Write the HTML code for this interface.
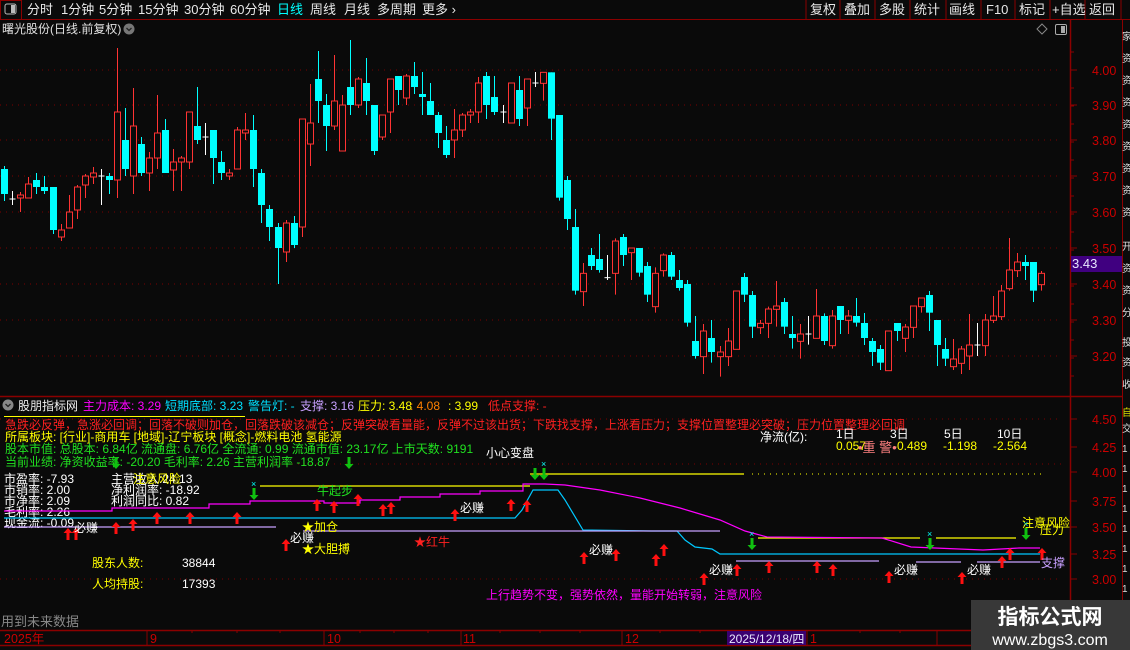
<!DOCTYPE html>
<html><head><meta charset="utf-8"><style>
html,body{margin:0;padding:0;background:#0a0a0a;width:1130px;height:650px;overflow:hidden}
svg{display:block;font-family:"Liberation Sans","Noto Sans CJK SC",sans-serif;font-size:12px}
</style></head><body>
<svg id="s" width="1130" height="650" xmlns="http://www.w3.org/2000/svg">
<rect width="1130" height="650" fill="#0a0a0a"/>
<!-- toolbar -->
<line x1="0" y1="19.5" x2="1130" y2="19.5" stroke="#8b0000"/>
<rect x="0.5" y="0.5" width="21" height="19" fill="none" stroke="#8b0000"/>
<rect x="5" y="4" width="11" height="10" rx="2" fill="none" stroke="#bbb"/><rect x="11" y="5" width="4" height="8" fill="#bbb"/>
<g fill="#e8e8e8" font-size="13">
<text x="27" y="14">分时</text><text x="61" y="14">1分钟</text><text x="99" y="14">5分钟</text><text x="138" y="14">15分钟</text><text x="184" y="14">30分钟</text><text x="230" y="14">60分钟</text>
<text x="277" y="14" fill="#00ffff">日线</text><text x="310" y="14">周线</text><text x="344" y="14">月线</text><text x="377" y="14">多周期</text><text x="422" y="14">更多 ›</text>
</g>
<g stroke="#8b0000"><line x1="806" y1="0" x2="806" y2="19"/><line x1="840" y1="0" x2="840" y2="19"/><line x1="875" y1="0" x2="875" y2="19"/><line x1="910" y1="0" x2="910" y2="19"/><line x1="946" y1="0" x2="946" y2="19"/><line x1="981" y1="0" x2="981" y2="19"/><line x1="1015" y1="0" x2="1015" y2="19"/><line x1="1050" y1="0" x2="1050" y2="19"/><line x1="1085" y1="0" x2="1085" y2="19"/><line x1="1121" y1="0" x2="1121" y2="19"/></g>
<g fill="#e8e8e8" font-size="13"><text x="810" y="14">复权</text><text x="844" y="14">叠加</text><text x="879" y="14">多股</text><text x="914" y="14">统计</text><text x="949" y="14">画线</text><text x="986" y="14">F10</text><text x="1019" y="14">标记</text><text x="1052" y="14">+自选</text><text x="1089" y="14">返回</text></g>
<!-- title -->
<text x="2" y="33" fill="#e0e0e0">曙光股份(日线.前复权)</text>
<circle cx="129" cy="29" r="5.5" fill="#777"/><path d="M126.5 28l2.5 2.5 2.5-2.5" stroke="#222" fill="none" stroke-width="1.3"/>
<path d="M1042 24l5 5-5 5-5-5z" fill="none" stroke="#888"/>
<rect x="1055.5" y="24.5" width="11" height="10" rx="1.5" fill="none" stroke="#aaa"/><rect x="1061" y="26" width="4" height="7" fill="#aaa"/>
<!-- main grid -->
<g stroke="#7a0000" stroke-dasharray="1,5">
<line x1="0" y1="70" x2="1062" y2="70"/><line x1="0" y1="105" x2="1062" y2="105"/><line x1="0" y1="140" x2="1062" y2="140"/><line x1="0" y1="176" x2="1062" y2="176"/><line x1="0" y1="212" x2="1062" y2="212"/><line x1="0" y1="248" x2="1062" y2="248"/><line x1="0" y1="284" x2="1062" y2="284"/><line x1="0" y1="320" x2="1062" y2="320"/><line x1="0" y1="356" x2="1062" y2="356"/>
</g>
<line x1="1070.5" y1="20" x2="1070.5" y2="630" stroke="#8b0000" stroke-width="1.5"/>
<line x1="1122.5" y1="20" x2="1122.5" y2="650" stroke="#8b0000"/>
<g id="ticks" stroke="#8b0000"></g>
<g fill="#cc0000" font-size="12.5"><text x="1092" y="75">4.00</text><text x="1092" y="110">3.90</text><text x="1092" y="145">3.80</text><text x="1092" y="181">3.70</text><text x="1092" y="217">3.60</text><text x="1092" y="253">3.50</text><text x="1092" y="289">3.40</text><text x="1092" y="325">3.30</text><text x="1092" y="361">3.20</text></g>
<rect x="1071" y="256" width="51" height="16" fill="#400080"/><text x="1072" y="268" fill="#e8e8ff" font-size="13">3.43</text>
<g id="candles"></g>
<!-- right strip -->
<g fill="#ddd" font-size="10"><text x="1122" y="40">家</text><text x="1122" y="62">资</text><text x="1122" y="84">资</text><text x="1122" y="106">资</text><text x="1122" y="128">资</text><text x="1122" y="150">资</text><text x="1122" y="172">资</text><text x="1122" y="194">资</text><text x="1122" y="216">资</text><text x="1122" y="250">开</text><text x="1122" y="272">资</text><text x="1122" y="294">资</text><text x="1122" y="316">分</text><text x="1122" y="346">投</text><text x="1122" y="366">资</text><text x="1122" y="388">收</text>
<text x="1122" y="416" fill="#dd0">自</text><text x="1122" y="432">交</text><text x="1122" y="452">1</text><text x="1122" y="472">1</text><text x="1122" y="492">1</text><text x="1122" y="512">1</text><text x="1122" y="532">1</text><text x="1122" y="552">1</text><text x="1122" y="572">1</text><text x="1122" y="592">1</text></g>
<!-- panel separator -->
<line x1="0" y1="396.5" x2="1122" y2="396.5" stroke="#8b0000" stroke-width="1.5"/>
<g fill="#cc0000" font-size="12.5"><text x="1092" y="424">4.50</text><text x="1092" y="452">4.25</text><text x="1092" y="477">4.00</text><text x="1092" y="506">3.75</text><text x="1092" y="532">3.50</text><text x="1092" y="559">3.25</text><text x="1092" y="584">3.00</text></g>
<g stroke="#7a0000" stroke-dasharray="1,5"><line x1="0" y1="419" x2="1062" y2="419"/><line x1="250" y1="464" x2="1062" y2="464"/><line x1="0" y1="579" x2="1062" y2="579"/></g>
<!-- header -->
<circle cx="8" cy="405" r="5.5" fill="#888"/><path d="M5.5 404l2.5 2.5 2.5-2.5" stroke="#222" fill="none" stroke-width="1.3"/>
<text x="18" y="410" fill="#eee">股朋指标网</text>
<text x="83" y="410" fill="#ff00ff">主力成本: 3.29</text>
<text x="165" y="410" fill="#00e0ff">短期底部: 3.23</text>
<text x="248" y="410" fill="#00e0ff">警告灯: -</text>
<text x="300" y="410" fill="#c8a0ff">支撑: 3.16</text>
<text x="358" y="410" fill="#ffff00">压力: 3.48</text>
<text x="410" y="410" fill="#ff8000">: 4.08</text>
<text x="448" y="410" fill="#ffff00">: 3.99</text>
<text x="488" y="410" fill="#ff2020">低点支撑: -</text>
<line x1="4" y1="416.5" x2="245" y2="416.5" stroke="#ffff00"/>
<text x="5" y="429" fill="#ff2020">急跌必反弹，急涨必回调；回落不破则加仓，回落跌破该减仓；反弹突破看量能，反弹不过该出货；下跌找支撑，上涨看压力；支撑位置整理必突破；压力位置整理必回调</text>
<text x="5" y="441" fill="#ffff00">所属板块: [行业]-商用车 [地域]-辽宁板块 [概念]-燃料电池 氢能源</text>
<text x="5" y="453" fill="#20e020">股本市值: 总股本: 6.84亿 流通盘: 6.76亿 全流通: 0.99 流通市值: 23.17亿 上市天数: 9191</text>
<text x="5" y="466" fill="#20e020">当前业绩: 净资收益率: -20.20 毛利率: 2.26 主营利润率 -18.87</text>
<text x="486" y="457" fill="#fff">小心变盘</text>
<g fill="#fff"><text x="4" y="483">市盈率: -7.93</text><text x="4" y="494">市销率: 2.00</text><text x="4" y="505">市净率: 2.09</text><text x="4" y="516">毛利率: 2.26</text><text x="4" y="527">现金流: -0.09</text>
<text x="111" y="483">主营收入:24.13</text><text x="111" y="494">净利润率: -18.92</text><text x="111" y="505">利润同比: 0.82</text></g>
<text x="133" y="483" fill="#ffff00">注意风险</text>
<text x="760" y="441" fill="#fff">净流(亿):</text>
<g fill="#fff"><text x="836" y="438">1日</text><text x="890" y="438">3日</text><text x="944" y="438">5日</text><text x="997" y="438">10日</text></g>
<g fill="#ffff00"><text x="836" y="450">0.057</text><text x="893" y="450">-0.489</text><text x="943" y="450">-1.198</text><text x="993" y="450">-2.564</text></g>
<text x="858" y="452" fill="#ff8080" font-size="13">•重 警•</text>
<!-- lines -->
<polyline fill="none" stroke="#ffff00" stroke-width="1.2" points="260,486 530,486"/>
<polyline fill="none" stroke="#ffff00" stroke-width="1.2" points="530,474 744,474"/>
<line x1="752" y1="474" x2="1044" y2="474" stroke="#ffff00" stroke-dasharray="1,5"/>
<polyline fill="none" stroke="#ffff00" stroke-width="1.2" points="758,538 920,538"/><polyline fill="none" stroke="#ffff00" stroke-width="1.2" points="936,538 1016,538"/>
<polyline fill="none" stroke="#ff00ff" stroke-width="1.2" points="4,511 112,511 112,508 209,508 209,504 250,504 250,501 324,501 324,503 360,503 360,500 400,500 400,497 440,497 440,494 480,494 480,491 523,491 523,484 545,484 565,485 600,490 640,498 680,508 720,520 745,531 767,537 882,538 911,547 983,550 1019,548 1040,548"/>
<polyline fill="none" stroke="#00c8ff" stroke-width="1.2" points="4,518 515,518 522,510 533,490 558,490 565,500 583,530 651,531 677,531 685,540 695,547 712,549 720,554 1040,554"/>
<polyline fill="none" stroke="#c8a0ff" stroke-width="1.2" points="4,527 276,527"/>
<polyline fill="none" stroke="#c8a0ff" stroke-width="1.2" points="303,531 720,531"/>
<polyline fill="none" stroke="#c8a0ff" stroke-width="1.2" points="736,561 879,561"/><polyline fill="none" stroke="#c8a0ff" stroke-width="1.2" points="916,562 961,562"/><polyline fill="none" stroke="#c8a0ff" stroke-width="1.2" points="977,562 1040,562"/>
<g id="arrows"></g>
<!-- labels -->
<g fill="#fff"><text x="74" y="532">必赚</text><text x="290" y="542">必赚</text><text x="460" y="512">必赚</text><text x="589" y="554">必赚</text><text x="709" y="574">必赚</text><text x="894" y="574">必赚</text><text x="967" y="574">必赚</text></g>
<g fill="#ffff00"><text x="302" y="531">★加仓</text><text x="302" y="553">★大胆搏</text><text x="1022" y="527">注意风险</text><text x="1040" y="534">压力</text></g>
<text x="317" y="495" fill="#20e020">牛起步</text>
<text x="414" y="546" fill="#ff2020">★红牛</text>
<text x="1041" y="567" fill="#c8a0ff">支撑</text>
<text x="92" y="567" fill="#ffff00">股东人数:</text><text x="182" y="567" fill="#fff">38844</text>
<text x="92" y="588" fill="#ffff00">人均持股:</text><text x="182" y="588" fill="#fff">17393</text>
<text x="486" y="599" fill="#ff00ff">上行趋势不变，强势依然，量能开始转弱，注意风险</text>
<text x="1" y="626" fill="#888" font-size="13">用到未来数据</text>
<!-- bottom axis -->
<line x1="0" y1="630.5" x2="1122" y2="630.5" stroke="#8b0000" stroke-width="1.5"/>
<line x1="0" y1="645.5" x2="1122" y2="645.5" stroke="#8b0000" stroke-width="1.5"/>
<g stroke="#8b0000"><line x1="147" y1="630" x2="147" y2="645"/><line x1="324" y1="630" x2="324" y2="645"/><line x1="461" y1="630" x2="461" y2="645"/><line x1="622" y1="630" x2="622" y2="645"/><line x1="807" y1="630" x2="807" y2="645"/><line x1="937" y1="630" x2="937" y2="645"/>
<line x1="192" y1="630" x2="192" y2="633"/><line x1="237" y1="630" x2="237" y2="633"/><line x1="280" y1="630" x2="280" y2="633"/><line x1="360" y1="630" x2="360" y2="633"/><line x1="394" y1="630" x2="394" y2="633"/><line x1="428" y1="630" x2="428" y2="633"/><line x1="500" y1="630" x2="500" y2="633"/><line x1="540" y1="630" x2="540" y2="633"/><line x1="580" y1="630" x2="580" y2="633"/><line x1="660" y1="630" x2="660" y2="633"/><line x1="700" y1="630" x2="700" y2="633"/><line x1="860" y1="630" x2="860" y2="633"/><line x1="900" y1="630" x2="900" y2="633"/></g>
<g fill="#cc0000" font-size="12.5"><text x="4" y="643">2025年</text><text x="150" y="643">9</text><text x="327" y="643">10</text><text x="463" y="643">11</text><text x="625" y="643">12</text><text x="810" y="643">1</text></g>
<rect x="727" y="631" width="79" height="14" fill="#3a0070"/><text x="729" y="643" fill="#e8e8ff">2025/12/18/四</text>
<!-- watermark -->
<rect x="971" y="600" width="159" height="50" fill="#383838"/>
<text x="1050" y="624" fill="#fff" font-size="21" font-weight="bold" text-anchor="middle">指标公式网</text>
<text x="1050" y="645" fill="#fff" font-size="16" text-anchor="middle">www.zbgs3.com</text>
</svg>
<script>
var NS="http://www.w3.org/2000/svg";
function el(p,t,a){var e=document.createElementNS(NS,t);for(var k in a)e.setAttribute(k,a[k]);p.appendChild(e);return e;}
var A=[['c',169,194,166,201],['w',199,199,191,205],['r',195,198,192,212],['r',184,198,177,198],['c',180,187,173,194],['c',187,191,176,194],['c',187,230,187,234],['r',230,237,224,241],['r',212,228,195,228],['r',187,210,185,219],['r',176,185,174,198],['r',173,177,167,184],['w',176,176,169,205],['c',176,180,173,194],['r',112,180,48,198],['c',140,169,108,176],['r',126,176,88,194],['c',144,173,137,176],['r',158,173,152,191],['r',133,158,95,169],['c',130,173,119,173],['r',162,170,149,191],['r',158,162,156,191],['r',112,162,112,169],['c',126,140,87,144],['w',137,137,123,155],['c',130,158,130,184],['c',162,173,151,180],['r',173,176,169,180],['r',130,169,127,169],['r',130,133,113,140],['c',130,169,115,187],['c',173,205,169,223],['c',209,227,205,241],['c',227,248,223,284],['r',223,252,220,262],['c',223,245,216,248],['r',119,227,119,237],['r',123,144,84,166],['c',79,101,51,123],['c',105,126,94,151],['r',101,126,55,130],['r',105,151,95,151],['c',87,105,40,115],['r',79,105,77,108],['c',83,101,58,115],['c',105,151,105,155],['r',115,137,115,140],['r',79,112,79,133],['c',76,90,76,105],['r',76,98,74,105],['c',76,87,62,94],['c',94,97,72,115],['c',101,115,83,115],['c',115,133,112,148],['c',140,155,126,158],['r',130,140,109,158],['r',115,130,113,137],['r',112,115,109,123],['r',83,112,77,123],['c',76,105,72,119],['c',97,112,76,115],['w',112,112,105,123],['r',83,123,83,123],['c',90,119,76,126],['r',79,108,79,126],['w',83,83,72,87]];
var B=[[10,'r',37,70,37,122],[34,'c',37,176,37,240],[58,'c',165,413,165,422],[82,'c',360,477,348,510],[106,'c',501,692,447,704],[130,'r',640,695,609,738],[154,'c',585,618,564,630],[178,'c',597,630,522,638],[202,'w',653,653,585,660],[226,'r',543,640,535,704],[250,'c',531,585,522,618],[274,'r',564,578,564,660],[298,'c',564,638,564,650],[322,'c',618,704,606,726],[346,'r',640,740,622,758],[370,'r',585,632,580,650],[394,'c',585,650,576,660],[418,'c',660,684,630,692],[442,'c',672,788,660,800],[466,'c',843,888,768,896],[490,'r',813,890,792,942],[514,'c',834,876,780,908],[540,'r',876,890,858,950],[564,'r',843,890,804,918],[588,'r',693,868,693,868],[612,'c',651,704,639,726],[636,'c',705,800,693,834],[660,'r',790,803,780,822],[684,'r',747,790,740,834],[708,'r',738,748,663,800],[732,'c',726,800,714,822],[756,'c',822,834,768,866],[780,'r',822,844,792,896],[804,'w',822,822,768,854],[828,'r',768,835,687,835],[852,'c',768,843,760,855],[876,'r',768,857,750,866],[900,'c',738,780,738,822],[924,'r',768,781,750,822],[948,'c',768,788,714,800],[972,'c',789,834,759,855],[996,'c',843,876,834,918],[1020,'c',867,908,855,930],[1045,'r',813,932,813,932],[1072,'c',789,813,789,843],[1096,'r',801,835,792,876],[1120,'r',738,802,738,834],[1144,'r',714,740,714,758],[1168,'c',705,758,693,813],[1192,'c',780,855,780,918],[1216,'c',867,896,834,918],[1240,'r',897,920,837,930],[1264,'r',867,910,858,942],[1288,'r',855,888,762,930],[1312,'w',855,855,789,888],[1336,'r',780,857,762,888],[1360,'r',768,781,708,789],[1384,'r',693,770,675,780],[1408,'r',630,686,534,692],[1432,'r',606,632,579,651],[1456,'c',606,618,585,660],[1480,'c',606,692,606,726],[1504,'r',640,674,633,692]];
var g=document.getElementById('candles');
function draw(x,t,bt,bb,wt,wb){
 var col=t=='r'?'#ff3333':(t=='c'?'#00ffff':'#ffffff');
 el(g,'line',{x1:x,y1:wt,x2:x,y2:wb,stroke:col,'stroke-width':1});
 if(t=='w'){el(g,'line',{x1:x-3,y1:bt,x2:x+3,y2:bt,stroke:col});return;}
 var h=Math.max(bb-bt,2);
 if(t=='r'){el(g,'rect',{x:x-3,y:bt,width:6,height:h,fill:'#0a0a0a',stroke:col,'stroke-width':1});}
 else el(g,'rect',{x:x-3.5,y:bt,width:7,height:h,fill:col});
}
for(var i=0;i<A.length;i++){var a=A[i];draw(Math.round(4.3+i*8.036)+0.5,a[0],a[1],a[2],a[3],a[4]);}
for(var j=0;j<B.length;j++){var b=B[j];draw(Math.round(540+b[0]/3)+0.5,b[1],60+b[2]/3,60+b[3]/3,60+b[4]/3,60+b[5]/3);}
var tk=document.getElementById('ticks');
for(var y=52;y<392;y+=18){el(tk,'line',{x1:1070,y1:y,x2:1074,y2:y});}
[70,105,140,176,212,248,284,320,356,419,447,472,501,527,554,579].forEach(function(y){el(tk,'line',{x1:1070,y1:y,x2:1077,y2:y});});
var ag=document.getElementById('arrows');
function up(x,y){el(ag,'path',{d:'M'+x+' '+y+'l-4.5 5h3v7h3v-7h3z',fill:'#ff1010'});}
function dn(x,y,cx){el(ag,'path',{d:'M'+x+' '+(y+12)+'l-4.5-5h3v-7h3v7h3z',fill:'#10c010'});if(cx)el(ag,'text',{x:x-3,y:y-1,fill:'#00ffff','font-size':'9'}).textContent='×';}
[[190,400],[212,400],[323,380],[368,372],[435,352],[527,352],[659,352],[793,433],[880,312],[927,318],[995,298],[1062,328],[1085,322],[1262,342],[1418,312],[1462,316]].forEach(function(p){up(Math.round(p[0]*0.3603),Math.round(395+p[1]/3));});
[[52,470],[141,463],[252,478],[275,448],[385,533],[477,508],[566,498],[700,498],[744,508],[898,528],[1101,532],[1212,483],[1235,460],[1324,460]].forEach(function(p){up(Math.round(565+p[0]*0.3603),Math.round(395+p[1]/3));});
dn(116,457);dn(349,457);dn(254,488,1);dn(535,468);dn(544,468,1);dn(752,538,1);dn(930,538,1);dn(1026,528,1);
</script>
</body></html>
